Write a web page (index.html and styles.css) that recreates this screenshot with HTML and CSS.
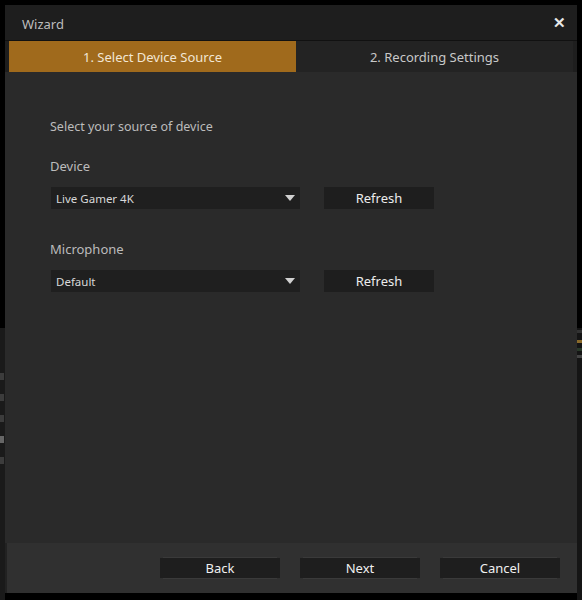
FILE: index.html
```html
<!DOCTYPE html>
<html>
<head>
<meta charset="utf-8">
<link rel="stylesheet" href="styles.css">
</head>
<body>
<div class="backdrop-left">
  <i class="g1"></i><i class="g2"></i><i class="g3"></i><i class="g4"></i><i class="g5"></i>
</div>
<div class="backdrop-right">
  <i class="l1"></i><i class="l2"></i><i class="l3"></i><i class="l4"></i>
</div>
<div class="window">
  <div class="titlebar">
    <span class="title">Wizard</span>
    <span class="close">&#x2715;</span>
  </div>
  <div class="tabs">
    <div class="tab active">1. Select Device Source</div>
    <div class="tab">2. Recording Settings</div>
  </div>
  <div class="content">
    <div class="intro">Select your source of device</div>
    <div class="label">Device</div>
    <div class="row">
      <div class="select"><span>Live Gamer 4K</span><span class="arrow"></span></div>
      <div class="btn">Refresh</div>
    </div>
    <div class="label mic">Microphone</div>
    <div class="row">
      <div class="select"><span>Default</span><span class="arrow"></span></div>
      <div class="btn">Refresh</div>
    </div>
  </div>
  <div class="footer">
    <div class="fbtn">Back</div>
    <div class="fbtn">Next</div>
    <div class="fbtn">Cancel</div>
  </div>
</div>
</body>
</html>
```
FILE: styles.css
```css
html, body {
  margin: 0;
  padding: 0;
  background: #000;
  width: 582px;
  height: 600px;
  overflow: hidden;
  font-family: "Noto Sans", "Open Sans", sans-serif;
}
.backdrop-left {
  position: absolute;
  left: 0;
  top: 328px;
  width: 5px;
  height: 272px;
  background: #1a1a1a;
  display: flex;
  flex-direction: column;
  padding-top: 45px;
  box-sizing: border-box;
}
.backdrop-left i {
  display: block;
  height: 7px;
  width: 4px;
  margin-bottom: 14px;
  background: #3c3c3c;
}
.backdrop-left .g4 { background: #666; }
.backdrop-right {
  position: absolute;
  left: 577px;
  top: 328px;
  width: 5px;
  height: 272px;
  background: #151515;
  display: flex;
  flex-direction: column;
}
.backdrop-right i { display: block; height: 3px; margin-top: 5px; }
.backdrop-right .l1 { background: #333; margin-top: 2px; }
.backdrop-right .l2 { background: #8a6a2a; margin-top: 7px; }
.backdrop-right .l3 { background: #2a3a2a; }
.backdrop-right .l4 { background: #444; margin-top: 4px; }
.window {
  position: absolute;
  left: 5px;
  top: 5px;
  width: 572px;
  height: 588px;
  background: #1e1e1e;
  display: flex;
  flex-direction: column;
}
.titlebar {
  height: 36px;
  display: flex;
  align-items: center;
  justify-content: space-between;
  padding: 3px 11px 0 17px;
  border-bottom: 1px solid #111;
  box-sizing: border-box;
}
.title {
  color: #bdbdbd;
  font-size: 13px;
}
.close {
  color: #e8e8e8;
  font-size: 15px;
  font-weight: bold;
  margin-top: -4px;
}
.tabs {
  display: flex;
  height: 31px;
  margin: 0 4px;
}
.tab {
  flex: 1;
  display: flex;
  align-items: center;
  justify-content: center;
  background: #232323;
  color: #c8c8c8;
  font-size: 13px;
}
.tab.active {
  flex: 0 0 287px;
  background: #a06a1c;
  color: #f2e6d4;
}
.content {
  flex: 1;
  background: #2a2a2a;
  padding: 46px 0 0 45px;
  box-sizing: border-box;
}
.intro {
  color: #bcbcbc;
  font-size: 12.5px;
  line-height: 18px;
}
.label {
  color: #bcbcbc;
  font-size: 13px;
  line-height: 18px;
  margin-top: 21px;
}
.label.mic { margin-top: 31px; }
.row {
  display: flex;
  align-items: center;
  margin-top: 12px;
}
.select {
  width: 249px;
  height: 22px;
  margin-left: 1px;
  background: #1f1f1f;
  color: #d8d8d8;
  font-size: 11.5px;
  display: flex;
  align-items: center;
  justify-content: space-between;
  padding: 0 5px;
  box-sizing: border-box;
}
.arrow {
  width: 0;
  height: 0;
  border-left: 5px solid transparent;
  border-right: 5px solid transparent;
  border-top: 6px solid #d0d0d0;
}
.btn {
  width: 110px;
  height: 22px;
  margin-left: 24px;
  background: #1e1e1e;
  color: #ececec;
  font-size: 13px;
  display: flex;
  align-items: center;
  justify-content: center;
}
.footer {
  height: 50px;
  background: #303030;
  display: flex;
  align-items: center;
  justify-content: flex-end;
  gap: 20px;
  padding-right: 17px;
  padding-bottom: 1px;
  border-left: 2px solid #222;
  box-sizing: border-box;
}
.fbtn {
  width: 120px;
  height: 20px;
  background: #1e1e1e;
  color: #f0f0f0;
  font-size: 13px;
  display: flex;
  align-items: center;
  justify-content: center;
  box-shadow: 0 -4px 0 -3px #3a3a3a, 0 4px 0 -3px #3a3a3a;
}
```
